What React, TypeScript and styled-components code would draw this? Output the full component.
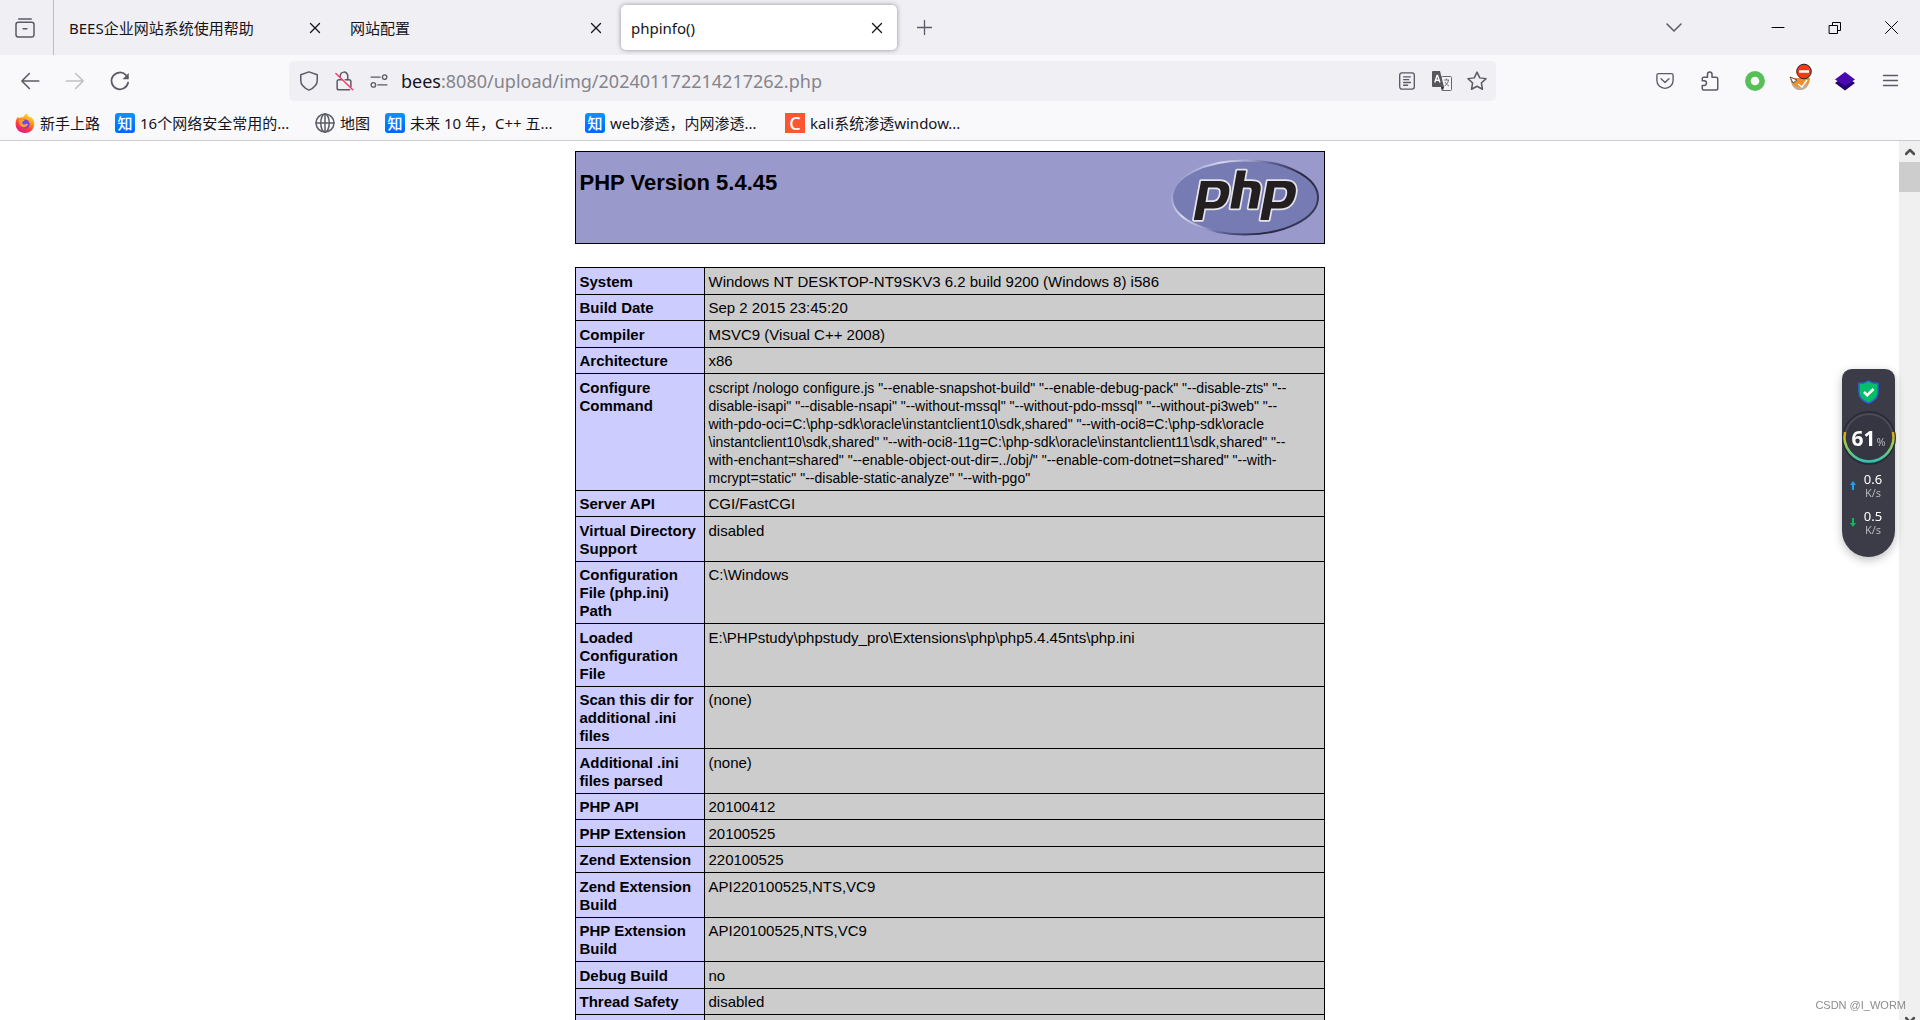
import React from "react";
import styled, { createGlobalStyle } from "styled-components";

const uiFont = `"Noto Sans", "Noto Sans CJK SC", sans-serif`;

const GlobalStyle = createGlobalStyle`
  * { box-sizing: border-box; }
  html, body, #root { height: 100%; }
  body {
    margin: 0;
    overflow: hidden;
    background: #fff;
    font-family: ${uiFont};
  }
  button { font: inherit; color: inherit; background: none; border: 0; padding: 0; }
`;

const Window = styled.div`
  height: 100vh;
  display: flex;
  flex-direction: column;
  overflow: hidden;
`;

const TabStrip = styled.header`
  flex: none;
  height: 55px;
  display: flex;
  align-items: center;
  background: #f0eff4;
  color: #15141a;
`;

const IconButton = styled.button<{ $w?: number; $color?: string }>`
  flex: none;
  display: flex;
  align-items: center;
  justify-content: center;
  width: ${(p) => p.$w ?? 40}px;
  height: 40px;
  color: ${(p) => p.$color ?? "#5b5b66"};
  svg { display: block; overflow: visible; }
`;

const ViewCell = styled.div`
  align-self: stretch;
  display: flex;
  align-items: center;
  width: 54px;
  padding-left: 5px;
  border-right: 1px solid #bdbcc2;
`;

const Tab = styled.div<{ $active?: boolean }>`
  display: flex;
  align-items: center;
  justify-content: space-between;
  width: 276px;
  height: 45px;
  margin-left: 5px;
  padding-left: 10px;
  border-radius: 5px;
  font-size: 15px;
  line-height: 20px;
  white-space: nowrap;
  background: ${(p) => (p.$active ? "#fff" : "transparent")};
  box-shadow: ${(p) => (p.$active ? "0 0 5px rgba(0, 0, 0, 0.4)" : "none")};
`;

const Spacer = styled.div`
  flex: 1;
`;

const NavBar = styled.nav`
  flex: none;
  height: 51px;
  display: flex;
  align-items: center;
  padding: 0 10px;
  background: #f9f9fb;
`;

const NavGroup = styled.div<{ $w: number; $end?: boolean }>`
  flex: none;
  width: ${(p) => p.$w}px;
  display: flex;
  gap: 5px;
  justify-content: ${(p) => (p.$end ? "flex-end" : "flex-start")};
`;

const UrlBar = styled.div`
  flex: 1;
  min-width: 0;
  height: 40px;
  display: flex;
  align-items: center;
  padding: 0 2px;
  border-radius: 5px;
  background: #f0eff4;
`;

const UrlField = styled.div`
  position: relative;
  flex: 1;
  height: 40px;
  margin-left: 5px;
  font-size: 18px;
  line-height: 40px;
`;

const UrlInput = styled.input`
  width: 100%;
  height: 40px;
  padding: 0;
  border: 0;
  outline: 0;
  background: transparent;
  color: transparent;
  font: inherit;
`;

const UrlText = styled.span`
  position: absolute;
  inset: 0;
  pointer-events: none;
  color: #85848b;
  b { font-weight: 400; color: #15141a; }
`;

const Bookmarks = styled.nav`
  flex: none;
  height: 35px;
  display: flex;
  align-items: center;
  gap: 15px;
  padding: 0 15px;
  background: #f9f9fb;
  border-bottom: 1px solid #ccc;
`;

const Bookmark = styled.a<{ $full?: boolean }>`
  display: flex;
  align-items: center;
  gap: 5px;
  width: ${(p) => (p.$full ? "185px" : "auto")};
  font-size: 15px;
  line-height: 20px;
  color: #15141a;
  text-decoration: none;
  white-space: nowrap;
  svg { display: block; flex: none; color: #5b5b66; }
`;

const Favicon = styled.span<{ $bg: string; $radius?: number; $size: number }>`
  display: flex;
  align-items: center;
  justify-content: center;
  width: 20px;
  height: 20px;
  border-radius: ${(p) => p.$radius ?? 0}px;
  background: ${(p) => p.$bg};
  color: #fff;
  font-size: ${(p) => p.$size}px;
  font-weight: 500;
  line-height: 20px;
`;

const Viewport = styled.div`
  flex: 1;
  min-height: 0;
  display: flex;
`;

const Page = styled.main`
  flex: 1;
  overflow: hidden;
  padding-top: 10px;
  font-family: "Liberation Sans", Arial, sans-serif;
  color: #000;
`;

const Banner = styled.section`
  width: 750px;
  height: 93px;
  margin: 0 auto 23px;
  display: flex;
  justify-content: space-between;
  padding: 7px 4px;
  border: 1px solid #000;
  background: #9999cc;
`;

const Title = styled.h1`
  margin: 10px 0 0;
  font-size: 22px;
  line-height: 28px;
`;

const InfoTable = styled.table`
  width: 750px;
  margin: 0 auto;
  border-collapse: collapse;
  table-layout: fixed;
  font-size: 15px;
  line-height: 18px;
  th, td {
    border: 1px solid #000;
    padding: 5px 4px 3px;
    text-align: left;
    vertical-align: top;
  }
  th { width: 129px; background: #ccccff; }
  td { background: #cccccc; }
  tr:nth-child(even) > * { padding-top: 4px; }
`;

const Value = styled.td<{ $preset?: boolean }>`
  white-space: ${(p) => (p.$preset ? "pre" : "normal")};
  font-size: ${(p) => (p.$preset ? 14 : 15)}px;
`;

const Scrollbar = styled.div`
  flex: none;
  width: 21px;
  display: flex;
  flex-direction: column;
  justify-content: space-between;
  background: #f0f0f0;
  color: #505050;
`;

const ScrollStep = styled.div<{ $cut?: boolean }>`
  display: flex;
  justify-content: center;
  align-items: center;
  height: 21px;
  margin-bottom: ${(p) => (p.$cut ? -10 : 0)}px;
`;

const ScrollThumb = styled.div`
  height: 30px;
  background: #cdcdcd;
`;

const Widget = styled.aside`
  position: fixed;
  top: 369px;
  right: 25px;
  width: 53px;
  height: 188px;
  display: flex;
  flex-direction: column;
  align-items: center;
  padding-top: 11px;
  border-radius: 10px 10px 27px 27px;
  background: #3b3c47;
  box-shadow: 0 3px 10px rgba(0, 0, 0, 0.25);
  color: #fff;
  svg { display: block; flex: none; overflow: visible; }
`;

const Gauge = styled.div`
  position: relative;
  width: 54px;
  height: 54px;
  margin: 7px 0 2px;
`;

const GaugeText = styled.div`
  position: absolute;
  inset: 0;
  display: flex;
  justify-content: center;
  align-items: baseline;
  font-size: 21px;
  line-height: 54px;
  font-weight: 700;
  small { font-size: 11px; font-weight: 400; color: #b4b5bb; margin-left: 1px; }
`;

const Rate = styled.div`
  width: 100%;
  display: flex;
  align-items: center;
  gap: 3px;
  height: 37px;
  padding-left: 8px;
`;

const RateText = styled.div`
  width: 28px;
  text-align: center;
  font-size: 13px;
  line-height: 14px;
  small { display: block; font-size: 11px; line-height: 14px; color: #b4b5bb; }
`;

const Watermark = styled.div`
  position: fixed;
  right: 14px;
  bottom: 8px;
  font-family: "Liberation Sans", Arial, sans-serif;
  font-size: 11px;
  line-height: 14px;
  color: #8c8c8c;
`;

type SvgProps = { size?: number; vb?: number; sw?: number; children: React.ReactNode };
const Svg = ({ size = 20, vb = 16, sw = 1.2, children }: SvgProps) => (
  <svg width={size} height={size} viewBox={`0 0 ${vb} ${vb}`} fill="none" stroke="currentColor"
    strokeWidth={sw} strokeLinecap="round" strokeLinejoin="round" aria-hidden="true">
    {children}
  </svg>
);

const CloseIcon = () => (
  <Svg size={10} vb={10} sw={1.3}><path d="M.5.5l9 9M9.5.5l-9 9" /></Svg>
);

const Zhihu = () => (
  <Favicon $bg="linear-gradient(#0a94ff, #0563ff)" $radius={3} $size={15}>知</Favicon>
);

const Firefox = () => (
  <svg width="20" height="20" viewBox="0 0 20 20" aria-hidden="true">
    <defs>
      <linearGradient id="fx" x1="0.8" y1="0" x2="0.3" y2="1">
        <stop offset="0" stopColor="#fff44f" />
        <stop offset="0.4" stopColor="#ff980e" />
        <stop offset="0.7" stopColor="#ff3647" />
        <stop offset="1" stopColor="#e31587" />
      </linearGradient>
    </defs>
    <path d="M12.500 0c-.4 2 .4 3 2 4.300C14.800 3.800 16.500 4 17.500 5.400 19 7.200 19.600 9 19.300 11.500 18.700 16.500 14.800 20 10 20 4.600 20 .6 16 .6 11 .6 8 1.400 5.600 3.200 3.600c0 1 .2 1.600.6 2C5 4.400 6.400 4 8 4.400 9 2.500 10.500.9 12.500 0z" fill="url(#fx)" />
    <circle cx="10" cy="11" r="4.600" fill="#7542e5" />
    <path d="M4 7c2-1.500 4.500-.8 5.800.8-1.800.2-2.800 1-2.600 2.300.3 1.500 2.200 1.900 3.800 1 1.200-.6 1.900-.4 2 .2-1.300 3.200-5.500 4-7.600 1.200C4 11 3.500 9 4 7z" fill="#ffa130" />
  </svg>
);

const Globe = () => (
  <Svg>
    <circle cx="8" cy="8" r="7.200" />
    <ellipse cx="8" cy="8" rx="3.400" ry="7.200" />
    <path d="M8 .8v14.400M.8 8h14.400" />
  </Svg>
);

const PhpLogo = () => (
  <svg width="150" height="78" viewBox="0 0 150 78" role="img" aria-label="php">
    <defs>
      <linearGradient id="rim" gradientUnits="userSpaceOnUse" x1="20" y1="0" x2="130" y2="78">
        <stop offset="0" stopColor="#8f92c6" />
        <stop offset="0.2" stopColor="#d6d8ee" />
        <stop offset="0.36" stopColor="#a3a6d0" />
        <stop offset="0.5" stopColor="#5f6396" />
        <stop offset="0.75" stopColor="#26263c" />
        <stop offset="1" stopColor="#3a3c60" />
      </linearGradient>
    </defs>
    <ellipse cx="75" cy="38.500" rx="73" ry="37" fill="#777bb3" stroke="url(#rim)" strokeWidth="2" />
    <g fill="#231f20" stroke="#e4e4ec" strokeWidth="3.500" strokeLinejoin="round" paintOrder="stroke">
      <path fillRule="evenodd" d="M31 22h18c9 0 11.500 5 10 13-1.800 9.500-6.500 14.500-15.500 14.500h-9l-2.200 11.500h-8.500zM38 28.500L35.500 43h6.500c5 0 7.500-2.500 8.500-7.500.8-4.500-.5-7-5-7z" />
      <path fillRule="evenodd" d="M97.500 22h18c9 0 11.500 5 10 13-1.800 9.500-6.500 14.500-15.500 14.500h-9l-2.200 11.500h-8.500zM104.500 28.500L102 43h6.500c5 0 7.500-2.500 8.500-7.500.8-4.500-.5-7-5-7z" />
      <path d="M67 11.500h9l-1.900 10.500H81.500c7.500 0 10.200 3 9 9.500L87.200 49.500h-8.700l3-16.500c.6-3.200 0-4.500-3.500-4.500h-5L69.200 49.500H60.300z" />
    </g>
  </svg>
);

const configureLines = [
  `cscript /nologo configure.js "--enable-snapshot-build" "--enable-debug-pack" "--disable-zts" "--`,
  `disable-isapi" "--disable-nsapi" "--without-mssql" "--without-pdo-mssql" "--without-pi3web" "--`,
  `with-pdo-oci=C:\\php-sdk\\oracle\\instantclient10\\sdk,shared" "--with-oci8=C:\\php-sdk\\oracle`,
  `\\instantclient10\\sdk,shared" "--with-oci8-11g=C:\\php-sdk\\oracle\\instantclient11\\sdk,shared" "--`,
  `with-enchant=shared" "--enable-object-out-dir=../obj/" "--enable-com-dotnet=shared" "--with-`,
  `mcrypt=static" "--disable-static-analyze" "--with-pgo"`,
];

const rows: [string, string][] = [
  ["System", "Windows NT DESKTOP-NT9SKV3 6.2 build 9200 (Windows 8) i586"],
  ["Build Date", "Sep 2 2015 23:45:20"],
  ["Compiler", "MSVC9 (Visual C++ 2008)"],
  ["Architecture", "x86"],
  ["Configure Command", configureLines.join("\n")],
  ["Server API", "CGI/FastCGI"],
  ["Virtual Directory Support", "disabled"],
  ["Configuration File (php.ini) Path", "C:\\Windows"],
  ["Loaded Configuration File", "E:\\PHPstudy\\phpstudy_pro\\Extensions\\php\\php5.4.45nts\\php.ini"],
  ["Scan this dir for additional .ini files", "(none)"],
  ["Additional .ini files parsed", "(none)"],
  ["PHP API", "20100412"],
  ["PHP Extension", "20100525"],
  ["Zend Extension", "220100525"],
  ["Zend Extension Build", "API220100525,NTS,VC9"],
  ["PHP Extension Build", "API20100525,NTS,VC9"],
  ["Debug Build", "no"],
  ["Thread Safety", "disabled"],
  ["", ""],
];

const tabs = [
  { title: "BEES企业网站系统使用帮助" },
  { title: "网站配置" },
  { title: "phpinfo()", active: true },
];

export default function App() {
  return (
    <Window>
      <GlobalStyle />
      <TabStrip>
        <ViewCell>
          <IconButton aria-label="View">
            <Svg>
              <path d="M3 .8h10" />
              <rect x=".8" y="3.400" width="14.400" height="11.800" rx="1.800" />
              <path d="M6.500 8.500h3" />
            </Svg>
          </IconButton>
        </ViewCell>
        {tabs.map((t) => (
          <Tab key={t.title} $active={t.active}>
            {t.title}
            <IconButton aria-label="Close tab" $color="#15141a"><CloseIcon /></IconButton>
          </Tab>
        ))}
        <IconButton aria-label="New tab" $w={54}>
          <Svg size={15} vb={15} sw={1.3}><path d="M7.500.5v14M.5 7.500h14" /></Svg>
        </IconButton>
        <Spacer />
        <IconButton aria-label="List tabs" $w={150}>
          <Svg size={16} sw={1.500}><path d="M1 4l7 7 7-7" /></Svg>
        </IconButton>
        <IconButton aria-label="Minimise" $w={57} $color="#000">
          <Svg size={12} vb={12} sw={1}><path d="M0 5.500h12" /></Svg>
        </IconButton>
        <IconButton aria-label="Restore" $w={57} $color="#000">
          <Svg size={12} vb={12} sw={1}><path d="M.5 3.500h8v8h-8zM3.500 3V.5h8v8H9" /></Svg>
        </IconButton>
        <IconButton aria-label="Close" $w={57} $color="#000">
          <Svg size={13} vb={13} sw={1}><path d="M.5.5l12 12M12.500.5l-12 12" /></Svg>
        </IconButton>
      </TabStrip>

      <NavBar>
        <NavGroup $w={279}>
          <IconButton aria-label="Back"><Svg sw={1.3}><path d="M15 8H1.500M7.500 2l-6 6 6 6" /></Svg></IconButton>
          <IconButton aria-label="Forward" $color="#bfbfc5"><Svg sw={1.3}><path d="M1 8h13.500M8.500 2l6 6-6 6" /></Svg></IconButton>
          <IconButton aria-label="Reload">
            <Svg sw={1.400}><path d="M14.500 9.200A6.700 6.700 0 1 1 12.800 3.300" /><path d="M15 1.500v5h-5z" fill="currentColor" stroke="none" /></Svg>
          </IconButton>
        </NavGroup>
        <UrlBar>
          <IconButton $w={35} aria-label="Tracking protection">
            <Svg><path d="M8 .7L14.600 3v4.500c0 3.500-2.800 6-6.600 7.800-3.800-1.800-6.600-4.300-6.600-7.800V3z" /></Svg>
          </IconButton>
          <IconButton $w={35} aria-label="Connection not secure">
            <Svg>
              <path d="M13.500 12.500V8.500c0-.8-.7-1.500-1.500-1.500H9M6 7H4c-.8 0-1.500.7-1.500 1.500v5c0 .8.7 1.500 1.500 1.500h8.500" />
              <path d="M5 4a3 3 0 0 1 6-.2V7M5 4v1" />
              <path d="M1.500 2l13.500 13" stroke="#ff3b6b" />
            </Svg>
          </IconButton>
          <IconButton $w={35} aria-label="Permissions">
            <Svg size={18}><circle cx="13" cy="4.500" r="2" /><path d="M1 4.500h8M7 11.500h8" /><circle cx="3" cy="11.500" r="2" /></Svg>
          </IconButton>
          <UrlField>
            <UrlInput aria-label="Address" defaultValue="" />
            <UrlText><b>bees</b>:8080/upload/img/202401172214217262.php</UrlText>
          </UrlField>
          <IconButton $w={35} aria-label="Reader view">
            <Svg size={18}><rect x="1.500" y=".8" width="13" height="14.400" rx="2" /><path d="M5 4.300h6M5 6.800h4.500M5 9.300h6M5 11.800h3.500" /></Svg>
          </IconButton>
          <IconButton $w={35} aria-label="Translate">
            <svg width="20" height="20" viewBox="0 0 20 20">
              <rect x="9.500" y="5.500" width="10" height="14" rx="1" fill="#f4f4f6" stroke="#66666c" />
              <path d="M12 9h5M14.500 7.500V9M16.500 9c-.5 3-2 5-4 6M13 11c1 2 2 3 4 4" stroke="#77777d" fill="none" />
              <path d="M1 0h7l4 16H1a1 1 0 0 1-1-1V1a1 1 0 0 1 1-1z" fill="#58585c" />
              <path d="M9 16h3l-1 3.500z" fill="#2e2e33" />
              <path d="M2.800 11.500L5 4.500h.6L7.900 11.500M3.600 9.200h3.400" stroke="#fff" strokeWidth="1.400" fill="none" />
            </svg>
          </IconButton>
          <IconButton $w={35} aria-label="Bookmark this page">
            <Svg><path d="M8 .9l2.200 4.600 5 .6-3.700 3.500.9 5L8 12.200l-4.400 2.400.9-5L.8 6.100l5-.6z" /></Svg>
          </IconButton>
        </UrlBar>
        <NavGroup $w={414} $end>
          <IconButton aria-label="Save to Pocket">
            <Svg size={18}><path d="M2.300 1.500h11.400c.8 0 1.500.7 1.500 1.500v4.500a7.200 7 0 0 1-14.400 0V3c0-.8.700-1.500 1.500-1.500z" /><path d="M4.500 6L8 9.300 11.500 6" /></Svg>
          </IconButton>
          <IconButton aria-label="Extensions">
            <Svg><path d="M6 5V2.600a1.800 1.800 0 0 1 3.600 0V5h3.200c.8 0 1.400.6 1.400 1.400v7.400c0 .8-.6 1.400-1.400 1.400H3c-.7 0-1.200-.6-1.200-1.200v-2.500h1.500a1.900 1.900 0 0 0 0-3.800H1.800V6.200C1.800 5.500 2.300 5 3 5z" /></Svg>
          </IconButton>
          <IconButton aria-label="Green ring"><Svg sw={4.500}><circle cx="8" cy="8" r="5.700" stroke="#57bf57" /></Svg></IconButton>
          <IconButton aria-label="Blocker">
            <svg width="24" height="26" viewBox="0 0 24 26">
              <rect x="5" y="-3" width="21" height="14" rx="1" fill="#fff" />
              <path d="M2 9l4 1h12l4 0c-.5 7-4 12-10 12S3 17 2 9z" fill="#ee8f2e" />
              <path d="M4 15c3 5 13 6 17-1-1 5-4.500 8-9 8s-7-3-8-7z" fill="#b9aea6" />
              <path d="M2 9l7 3-4 3z" fill="#fff" stroke="#555" />
              <path d="M10 16l4 3 5-7" fill="none" stroke="#fff" strokeWidth="1.500" />
              <circle cx="16" cy="3.500" r="7.300" fill="#f23a18" stroke="#222" />
              <path d="M11 3.500h10" stroke="#fff" strokeWidth="2.500" />
            </svg>
          </IconButton>
          <IconButton aria-label="Layers">
            <svg width="20" height="20" viewBox="0 0 20 20"><path d="M0 12l10-7 10 7-10 7.500z" fill="#220070" /><path d="M0 8.500L10 1l10 7.500-10 6.500z" fill="#4a09b0" /></svg>
          </IconButton>
          <IconButton aria-label="Menu"><Svg size={15} vb={15} sw={1.3}><path d="M.5 2.500h14M.5 7.500h14M.5 12.500h14" /></Svg></IconButton>
        </NavGroup>
      </NavBar>

      <Bookmarks>
        <Bookmark href="#"><Firefox />新手上路</Bookmark>
        <Bookmark href="#" $full><Zhihu />16个网络安全常用的...</Bookmark>
        <Bookmark href="#"><Globe />地图</Bookmark>
        <Bookmark href="#" $full><Zhihu />未来 10 年，C++ 五...</Bookmark>
        <Bookmark href="#" $full><Zhihu />web渗透，内网渗透...</Bookmark>
        <Bookmark href="#" $full><Favicon $bg="#fc5531" $size={18}>C</Favicon>kali系统渗透window...</Bookmark>
      </Bookmarks>

      <Viewport>
        <Page>
          <Banner>
            <Title>PHP Version 5.4.45</Title>
            <PhpLogo />
          </Banner>
          <InfoTable>
            <tbody>
              {rows.map(([k, v], i) => (
                <tr key={i}>
                  <th scope="row">{k}</th>
                  <Value $preset={v.includes("\n")}>{v}</Value>
                </tr>
              ))}
            </tbody>
          </InfoTable>
        </Page>
        <Scrollbar>
          <div>
            <ScrollStep><Svg size={10} vb={10} sw={2.500}><path d="M1 7l4-4 4 4" /></Svg></ScrollStep>
            <ScrollThumb />
          </div>
          <ScrollStep $cut><Svg size={10} vb={10} sw={2.500}><path d="M1 3l4 4 4-4" /></Svg></ScrollStep>
        </Scrollbar>
      </Viewport>

      <Widget>
        <svg width="21" height="24" viewBox="0 0 21 24">
          <path d="M10.500 1c3 2 6 2.600 9.500 2.600V12c0 5.500-4 9-9.500 11C5 21 1 17.500 1 12V3.600C4.500 3.600 7.500 3 10.500 1z" fill="#05bf68" stroke="#2c64d8" strokeWidth="1.500" />
          <path d="M6 12l3.200 3.200L15.500 9" fill="none" stroke="#fff" strokeWidth="2.500" />
        </svg>
        <Gauge>
          <svg width="54" height="54" viewBox="0 0 54 54">
            <defs>
              <linearGradient id="arc" x1="0" y1="0" x2="0" y2="1">
                <stop offset="0" stopColor="#e0a80c" />
                <stop offset="0.4" stopColor="#9fce4c" />
                <stop offset="1" stopColor="#2fc4b2" />
              </linearGradient>
            </defs>
            <circle cx="27" cy="27" r="27" fill="#2a2b36" />
            <circle cx="27" cy="27" r="24" fill="#353641" stroke="#4a4b57" strokeWidth="2" />
            <path d="M3 21A24.500 24.500 0 1 0 51 21" fill="none" stroke="url(#arc)" strokeWidth="2.500" />
          </svg>
          <GaugeText>61<small>%</small></GaugeText>
        </Gauge>
        <Rate>
          <svg width="6" height="9" viewBox="0 0 6 9"><path d="M3 0L6 4H4v5H2V4H0z" fill="#1ba1f5" /></svg>
          <RateText>0.6<small>K/s</small></RateText>
        </Rate>
        <Rate>
          <svg width="6" height="9" viewBox="0 0 6 9"><path d="M3 9L6 5H4V0H2v5H0z" fill="#0fb860" /></svg>
          <RateText>0.5<small>K/s</small></RateText>
        </Rate>
      </Widget>
      <Watermark>CSDN @I_WORM</Watermark>
    </Window>
  );
}
